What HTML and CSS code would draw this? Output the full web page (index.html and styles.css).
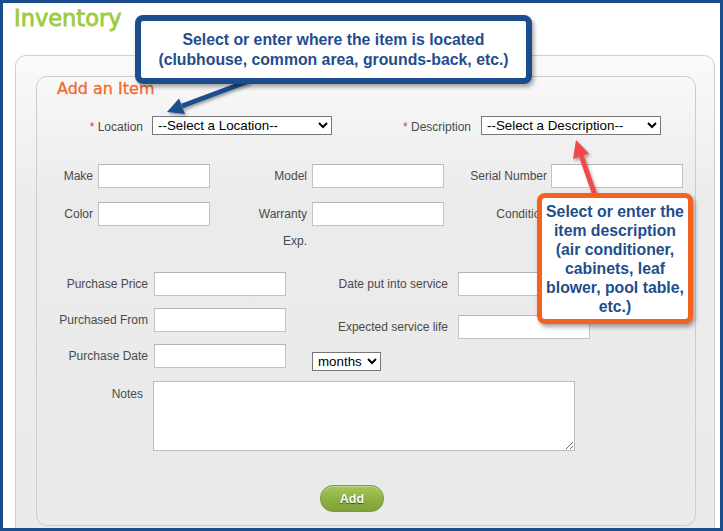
FILE: index.html
```html
<!DOCTYPE html>
<html lang="en">
<head>
<meta charset="utf-8">
<title>Inventory</title>
<link rel="stylesheet" href="styles.css">
</head>
<body>
<div class="frame">
  <h1 class="title">Inventory</h1>
  <div class="outer">
    <div class="inner">
      <h2 class="legend">Add an Item</h2>

      <div class="row row-top">
        <label class="lbl lbl-loc"><span class="req">*</span>&nbsp;Location</label>
        <select class="sel sel-wide"><option>--Select a Location--</option></select>
        <label class="lbl lbl-desc"><span class="req">*</span>&nbsp;Description</label>
        <select class="sel sel-wide"><option>--Select a Description--</option></select>
      </div>

      <div class="row row-make">
        <label class="lbl c1">Make</label><input class="inp inp-narrow" type="text">
        <label class="lbl c2">Model</label><input class="inp" type="text">
        <label class="lbl c3">Serial Number</label><input class="inp" type="text">
      </div>

      <div class="row row-color">
        <label class="lbl c1 tall">Color</label><input class="inp inp-narrow" type="text">
        <label class="lbl c2 stack"><span class="line">Warranty</span><span class="sub">Exp.</span></label><input class="inp" type="text">
        <label class="lbl c3 tall">Condition</label><input class="inp" type="text">
      </div>

      <div class="mid">
        <div class="col-left">
          <div class="mrow"><label class="lbl l-left">Purchase Price</label><input class="inp" type="text"></div>
          <div class="mrow"><label class="lbl l-left">Purchased From</label><input class="inp" type="text"></div>
          <div class="mrow"><label class="lbl l-left">Purchase Date</label><input class="inp" type="text"></div>
        </div>
        <div class="col-right">
          <div class="mrow"><label class="lbl l-right">Date put into service</label><input class="inp" type="text"></div>
          <div class="mrow mrow-life"><label class="lbl l-right">Expected service life</label><input class="inp" type="text"></div>
          <select class="sel sel-months"><option>months</option></select>
        </div>
      </div>

      <div class="row row-notes">
        <label class="lbl l-notes">Notes</label>
        <textarea class="notes"></textarea>
      </div>

      <div class="actions">
        <button class="btn-add" type="button">Add</button>
      </div>
    </div>
  </div>

  <svg class="arrows" width="723" height="531" viewBox="0 0 723 531" aria-hidden="true">
    <defs>
      <filter id="sh" x="-20%" y="-20%" width="140%" height="140%">
        <feDropShadow dx="1.5" dy="2" stdDeviation="1.5" flood-color="#000" flood-opacity="0.35"/>
      </filter>
    </defs>
    <g filter="url(#sh)">
      <line x1="249" y1="81" x2="182" y2="106" stroke="#1f4e8c" stroke-width="5"/>
      <polygon points="167,112 179,98.5 185,114" fill="#1f4e8c"/>
    </g>
    <g filter="url(#sh)">
      <line x1="596" y1="198" x2="581" y2="155" stroke="#f04848" stroke-width="5"/>
      <polygon points="576,140 589,153.5 573,159" fill="#f04848"/>
    </g>
  </svg>

  <div class="callout callout-loc">
    <p>Select or enter where the item is located<br>(clubhouse, common area, grounds-back, etc.)</p>
  </div>
  <div class="callout callout-desc">
    <p>Select or enter the<br>item description<br>(air conditioner,<br>cabinets, leaf<br>blower, pool table,<br>etc.)</p>
  </div>
</div>
</body>
</html>
```

FILE: styles.css
```css
* { box-sizing: border-box; }

html, body {
  margin: 0;
  padding: 0;
  background: #ffffff;
}

.frame {
  position: relative;
  width: 723px;
  height: 531px;
  border: 3px solid #1b4d8c;
  background: #ffffff;
  overflow: hidden;
  font-family: "Liberation Sans", Arial, sans-serif;
}

.title {
  margin: 0;
  padding: 2px 0 0 11px;
  font-family: "DejaVu Sans", Verdana, sans-serif;
  font-weight: normal;
  font-size: 22.5px;
  line-height: 27px;
  color: #9dcb3e;
  -webkit-text-stroke: 0.8px #9dcb3e;
}

.outer {
  margin: 23px 0 0 12px;
  width: 700px;
  padding: 20px 18px 20px 20px;
  border: 1px solid #cfcfcf;
  border-radius: 11px;
  background: linear-gradient(#fafafa, #ececec 140px, #eaeaea);
}

.inner {
  width: 660px;
  padding: 2px 0 13px 0;
  border: 1px solid #cdcdcd;
  border-radius: 11px;
  background: linear-gradient(#f8f8f8, #ebebeb 120px, #eaeaea);
}

.legend {
  margin: 0 0 0 20px;
  font-family: "DejaVu Sans", Verdana, sans-serif;
  font-weight: normal;
  font-size: 16px;
  line-height: 19px;
  color: #f26a2a;
  -webkit-text-stroke: 0.3px #f26a2a;
}

.lbl {
  display: block;
  font-size: 12px;
  line-height: 14px;
  color: #4a4a4a;
  text-align: right;
  flex: none;
}

.req { color: #d93a3a; }

.row {
  display: flex;
}

.row-top {
  margin-top: 18px;
  align-items: flex-start;
}
.row-top .lbl { padding-top: 4px; }
.lbl-loc { width: 106px; margin-right: 9px; }
.lbl-desc { width: 139px; margin-right: 10px; }

.sel {
  display: block;
  flex: none;
  height: 19px;
  border: 1px solid #767676;
  border-radius: 0;
  background-color: #ffffff;
  color: #000000;
  font-family: "Liberation Sans", Arial, sans-serif;
  font-size: 13.33px;
  padding: 0 0 0 1px;
}
.sel-wide { width: 180px; }

.inp {
  display: block;
  flex: none;
  width: 132px;
  height: 24px;
  border: 1px solid #c2c2c2;
  border-top-color: #b4b4b4;
  background: #ffffff;
  padding: 0 3px;
  font-size: 13px;
}
.inp-narrow { width: 112px; }

.row-make {
  margin-top: 29px;
  align-items: center;
}
.c1 { width: 56px; margin-right: 5px; }
.c2 { width: 97px; margin-right: 5px; }
.c3 { width: 103px; margin-right: 4px; }

.row-color {
  margin-top: 14px;
  align-items: flex-start;
}
.tall { line-height: 24px; }
.stack {
  display: flex;
  flex-direction: column;
  align-items: flex-end;
}
.stack .line { line-height: 24px; }
.stack .sub { line-height: 14px; margin-top: 8px; }

.mid {
  display: flex;
  margin-top: 24px;
  align-items: flex-start;
}
.col-left {
  width: 249px;
  display: flex;
  flex-direction: column;
  gap: 12px;
}
.col-right {
  display: flex;
  flex-direction: column;
  align-items: flex-start;
}
.mrow {
  display: flex;
  align-items: center;
}
.l-left { width: 111px; margin-right: 6px; }
.l-right { width: 162px; margin-right: 10px; }
.mrow-life { margin-top: 19px; }
.sel-months {
  width: 69px;
  margin: 13px 0 0 26px;
}

.row-notes {
  margin-top: 10px;
  align-items: flex-start;
}
.l-notes { width: 106px; margin-right: 10px; padding-top: 6px; }
.notes {
  display: block;
  width: 422px;
  height: 70px;
  border: 1px solid #bdbdbd;
  background: #ffffff;
  margin: 0;
}

.actions {
  margin-top: 34px;
  display: flex;
}
.btn-add {
  margin-left: 283px;
  width: 64px;
  height: 27px;
  border: 1px solid #7a9a3e;
  border-radius: 13px;
  background: linear-gradient(#a6c955, #8aae42 60%, #7fa239);
  color: #ffffff;
  font-family: "Liberation Sans", Arial, sans-serif;
  font-weight: bold;
  font-size: 12.5px;
  text-shadow: 0 1px 1px rgba(0, 0, 0, 0.6);
  padding: 0;
  box-shadow: inset 0 1px 0 rgba(255, 255, 255, 0.35);
}

.arrows {
  position: absolute;
  left: -3px;
  top: -3px;
  pointer-events: none;
}

.callout {
  position: absolute;
  display: flex;
  align-items: center;
  justify-content: center;
  background: #ffffff;
  border-radius: 8px;
  box-shadow: 2px 3px 4px rgba(0, 0, 0, 0.35);
  color: #1f4e8c;
  font-weight: bold;
  font-size: 15.8px;
  text-align: center;
}
.callout p { margin: 0; }

.callout-loc {
  left: 132px;
  top: 12px;
  width: 397px;
  height: 69px;
  border: 6px solid #1b4d8c;
  line-height: 20px;
}

.callout-desc {
  left: 534px;
  top: 190px;
  width: 156px;
  height: 131px;
  border: 5px solid #f3621f;
  line-height: 19px;
}
```
